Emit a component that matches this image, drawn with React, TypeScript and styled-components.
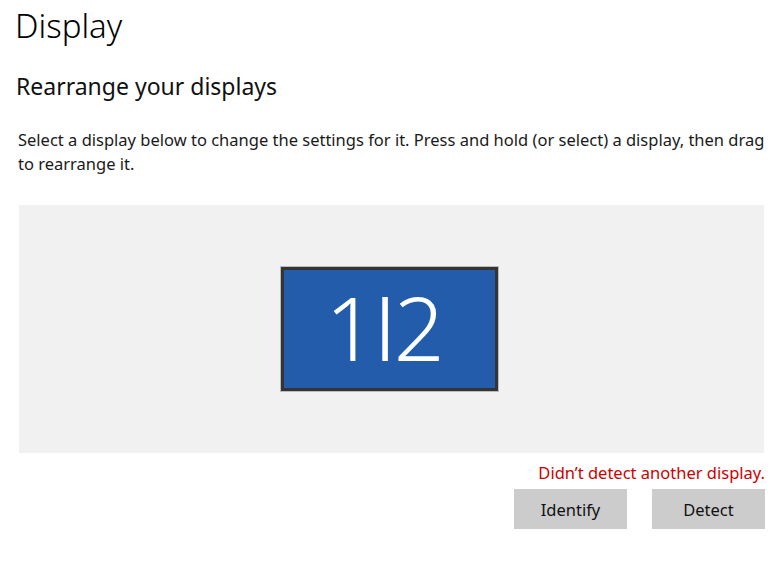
import React from 'react';
import styled, {createGlobalStyle} from "styled-components";

const GlobalStyle = createGlobalStyle`
  html, body {
    margin: 0;
    padding: 0;
    background: #fff;
    overflow: hidden;
  }
  body {
    font-family: "Noto Sans", "Open Sans", sans-serif;
  }
`

const Page = styled.main`
  width: 784px;
  height: 580px;
  box-sizing: border-box;
  padding: 4px 19px 0 18px;
  display: flex;
  flex-direction: column;
`

const Title = styled.h1`
  margin: 0 0 0 -3px;
  font-size: 33px;
  line-height: 44px;
  font-weight: 300;
  color: #000;
`

const Subtitle = styled.h2`
  margin: 23px 0 0 -2px;
  font-size: 23px;
  line-height: 30px;
  font-weight: 400;
  color: #111;
`

const Description = styled.p`
  margin: 27px 0 0 0;
  font-size: 16.5px;
  line-height: 24px;
  color: #1a1a1a;
  width: 750px;
`

const Canvas = styled.div`
  margin: 29px 1px 0 1px;
  height: 248px;
  background: #f1f1f1;
  display: flex;
  align-items: center;
  justify-content: center;
  padding-right: 5px;
  padding-bottom: 1px;
  box-sizing: border-box;
`

const Monitor = styled.div`
  width: 217px;
  height: 124px;
  box-sizing: border-box;
  padding: 0 8px 5px 0;
  background: #225cab;
  border: 3px solid #343434;
  box-shadow: 0 0 0 1px #bcbcbc;
  display: flex;
  align-items: center;
  justify-content: center;
  color: #fff;
  font-size: 89px;
  font-weight: 300;
  line-height: 1;
`

const MonitorLabel = styled.span`
  white-space: nowrap;
`

const Divider = styled.span`
  font-family: "Liberation Sans", sans-serif;
  font-size: 68px;
  font-weight: 400;
  line-height: 0;
  vertical-align: 14px;
`

const Warning = styled.div`
  margin-top: 8px;
  text-align: right;
  font-size: 16.5px;
  line-height: 24px;
  color: #cc0000;
`

const Actions = styled.div`
  margin-top: 4px;
  display: flex;
  justify-content: flex-end;
  gap: 25px;
`

const ActionButton = styled.button`
  width: 113px;
  height: 40px;
  border: 0;
  padding: 0;
  background: #cccccc;
  color: #111;
  font-family: inherit;
  font-size: 16.5px;
`

const App = () => {
  return (
    <>
      <GlobalStyle/>
      <Page>
        <Title>Display</Title>
        <Subtitle>Rearrange your displays</Subtitle>
        <Description>
          Select a display below to change the settings for it. Press and hold (or select) a display, then drag to rearrange it.
        </Description>
        <Canvas>
          <Monitor>
            <MonitorLabel>1<Divider>|</Divider>2</MonitorLabel>
          </Monitor>
        </Canvas>
        <Warning>Didn’t detect another display.</Warning>
        <Actions>
          <ActionButton>Identify</ActionButton>
          <ActionButton>Detect</ActionButton>
        </Actions>
      </Page>
    </>
  );
};

export default App;
